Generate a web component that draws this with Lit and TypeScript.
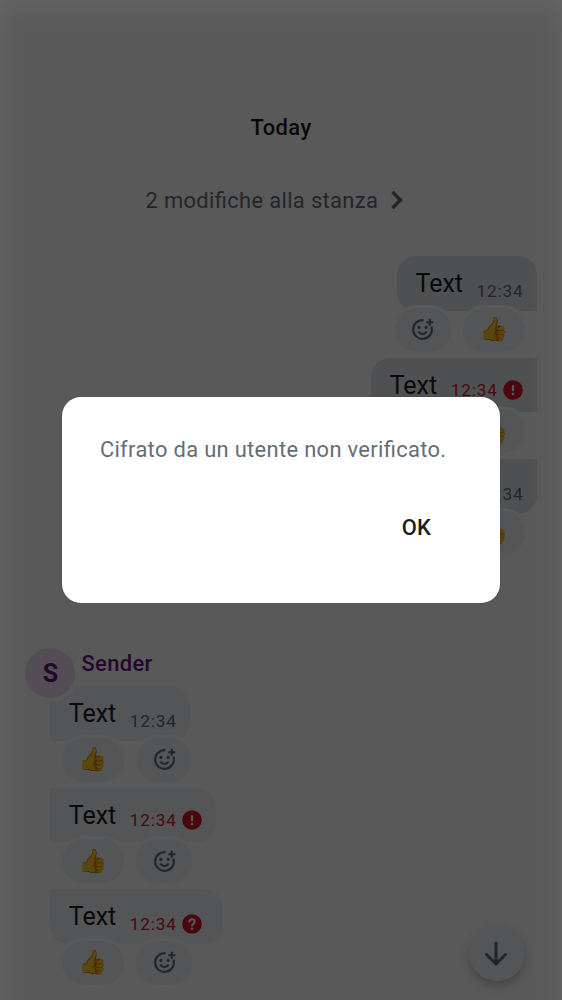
import { LitElement, html, css, svg, nothing } from "lit";
import { customElement, property } from "lit/decorators.js";

@customElement("chat-reactions")
class ChatReactions extends LitElement {
  @property({ type: Boolean }) mine = false;
  static styles = css`
    :host { display: flex; gap: 6px; margin-top: -6px; position: relative; }
    .pill {
      box-sizing: border-box; height: 50px; border: 3.2px solid #fff; border-radius: 25px;
      background: #f0f2f5; display: flex; align-items: center; justify-content: center;
    }
    .thumb { width: 68px; font: 23.4px/1 "Noto Color Emoji", sans-serif; }
    .add { width: 62px; color: #656d77; }
    svg { display: block; }
  `;
  render() {
    const thumb = html`<div class="pill thumb"><span>👍️</span></div>`;
    const add = html`<div class="pill add">
      <svg width="25" height="25" viewBox="0 0 24 24" fill="none" stroke="currentColor" stroke-width="2">
        <path d="M13 3.06A9 9 0 1 0 20.6 9.3" />
        <path d="M19 1.6v6.8M15.6 5h6.8" />
        <path d="M8 14.1c1 1.5 2.4 2.3 4 2.3s3-.8 4-2.3" />
        <circle cx="8.5" cy="10" r="1.5" fill="currentColor" stroke="none" />
        <circle cx="15.5" cy="10" r="1.5" fill="currentColor" stroke="none" />
      </svg>
    </div>`;
    return this.mine ? html`${add}${thumb}` : html`${thumb}${add}`;
  }
}

@customElement("chat-message")
class ChatMessage extends LitElement {
  @property() place = "first";
  @property() mark = "";
  @property({ type: Boolean }) mine = false;
  static styles = css`
    :host { display: flex; flex-direction: column; align-items: flex-start; height: 101.5px; }
    :host([mine]) { align-items: flex-end; }
    .bubble {
      box-sizing: border-box; height: 54.4px; padding: 0 13.5px 0 18.7px; display: flex;
      background: #f0f2f5; border-radius: 0 19px 19px 0; color: #1b1d22;
    }
    .bubble.marked { padding-right: 14.3px; }
    .bubble.last { border-bottom-left-radius: 19px; }
    .bubble.last.marked { padding-right: 21px; }
    .bubble.mine { background: #e1e6ec; border-radius: 19px 0 0 19px; }
    .bubble.mine.first { border-top-right-radius: 19px; }
    .bubble.mine.last { border-bottom-right-radius: 19px; }
    .text { font-size: 25px; line-height: 34px; padding-top: 11px; width: 61px; }
    .meta {
      display: flex; align-items: center; height: 20px; margin-top: 24.6px; gap: 5px;
      font-size: 17.2px; letter-spacing: .85px; color: #656d77;
    }
    .meta.up { margin-top: 22.5px; }
    .meta.red { color: #d51928; }
    svg { display: block; }
    chat-reactions { margin-left: 9px; }
    :host([mine]) chat-reactions { margin: -6px 9.4px 0 0; }
  `;
  render() {
    const m = this.mark;
    return html`
      <div class="bubble ${this.place} ${this.mine ? "mine" : ""} ${m ? "marked" : ""}">
        <div class="text">Text</div>
        <div class="meta ${m ? "red" : ""} ${m === "!" ? "up" : ""}">
          <span>12:34</span>
          ${m
            ? html`<svg width="20" height="20" viewBox="0 0 20 20">
                <circle cx="10" cy="10" r="9.8" fill="#d51928" />
                ${m === "!"
                  ? svg`<path d="M10 6v4.300" stroke="#fff" stroke-width="2.2" stroke-linecap="round" /><circle cx="10" cy="14" r="1.2" fill="#fff" />`
                  : svg`<path d="M7.300 7.700c.2-1.700 1.300-2.500 2.700-2.500 1.600 0 2.700 1 2.700 2.400 0 1.900-2.400 2.100-2.700 4" fill="none" stroke="#fff" stroke-width="2" stroke-linecap="round" /><circle cx="10" cy="14.8" r="1.2" fill="#fff" />`}
              </svg>`
            : nothing}
        </div>
      </div>
      <chat-reactions ?mine=${this.mine}></chat-reactions>
    `;
  }
}

@customElement("app-root")
class AppRoot extends LitElement {
  static styles = css`
    :host {
      display: block; position: relative; width: 562px; height: 1000px; overflow: hidden;
      background: #fff; font-family: Roboto, sans-serif; color: #1b1d22;
    }
    svg { display: block; }
    .timeline { display: flex; flex-direction: column; height: 1000px; isolation: isolate; }
    .day { margin-top: 112px; height: 32px; line-height: 32px; text-align: center; font-size: 21.9px; font-weight: 500; letter-spacing: .45px; }
    .changes {
      margin: 40px 0 0 145.5px; height: 32px; display: flex; align-items: center; gap: 12px;
      color: #656d77; font-size: 21.9px; letter-spacing: .36px; font-feature-settings: "liga" 1;
    }
    .out { margin: 40.4px 25px 0 0; height: 304.5px; }
    .sender { display: flex; height: 50px; margin: 87.5px 0 0 25.4px; }
    .avatar {
      position: relative; z-index: 1; width: 50px; height: 50px; border-radius: 50%; background: #f1dcf3;
      box-shadow: 0 0 0 4px #fff; color: #671481; text-align: center;
      font-size: 25px; font-weight: 700; line-height: 51px;
    }
    .name { margin-left: 6px; line-height: 32px; color: #671481; font-size: 21.9px; font-weight: 500; letter-spacing: .4px; }
    .in { margin: -12px 0 0 50px; }
    .fab {
      position: absolute; left: 468.5px; top: 925px; width: 56px; height: 56px; border-radius: 50%;
      background: #f0f2f5; box-shadow: 0 5px 11px rgba(0,0,0,.24); color: #656d77;
      display: flex; align-items: center; justify-content: center;
    }
    .fab svg { margin-right: 1px; }
    .scrim { position: absolute; inset: 0; background: rgba(0,0,0,.6); overflow: hidden; }
    .shade { position: absolute; inset: 3px 0 -60px 0; background: rgba(0,0,0,.12); filter: blur(15px); }
    .dialog {
      position: absolute; left: 62.4px; top: 397px; width: 437.2px; height: 206px; box-sizing: border-box;
      background: #fff; border-radius: 19px; padding: 37px 37.5px; display: flex; flex-direction: column;
      box-shadow: 0 0 2px rgba(0,0,0,.15);
    }
    .message { line-height: 32px; white-space: nowrap; color: #656d77; font-size: 21.9px; letter-spacing: .33px; font-feature-settings: "liga" 1; }
    .ok { align-self: flex-end; margin: 46px 31px 0 0; line-height: 31px; font-size: 21.9px; font-weight: 500; letter-spacing: .2px; }
  `;
  render() {
    return html`
      <main class="timeline">
        <div class="day">Today</div>
        <div class="changes">
          <span>2 modifiche alla stanza</span>
          <svg width="14" height="20" viewBox="0 0 14 20" fill="none" stroke="currentColor" stroke-width="3.4" stroke-linejoin="miter"><path d="M2.500 2l8 8-8 8" /></svg>
        </div>
        <section class="out">
          <chat-message mine place="first"></chat-message>
          <chat-message mine place="middle" mark="!"></chat-message>
          <chat-message mine place="last"></chat-message>
        </section>
        <header class="sender"><div class="avatar">S</div><div class="name">Sender</div></header>
        <section class="in">
          <chat-message place="first"></chat-message>
          <chat-message place="middle" mark="!"></chat-message>
          <chat-message place="last" mark="?"></chat-message>
        </section>
      </main>
      <div class="fab">
        <svg width="28" height="28" viewBox="0 0 28 28" fill="none" stroke="currentColor" stroke-width="3" stroke-linecap="round" stroke-linejoin="round"><path d="M14 4v21M4.500 15.500L14 25l9.500-9.500" /></svg>
      </div>
      <div class="scrim"><div class="shade"></div></div>
      <div class="dialog" role="dialog">
        <div class="message">Cifrato da un utente non verificato.</div>
        <div class="ok">OK</div>
      </div>
    `;
  }
}
